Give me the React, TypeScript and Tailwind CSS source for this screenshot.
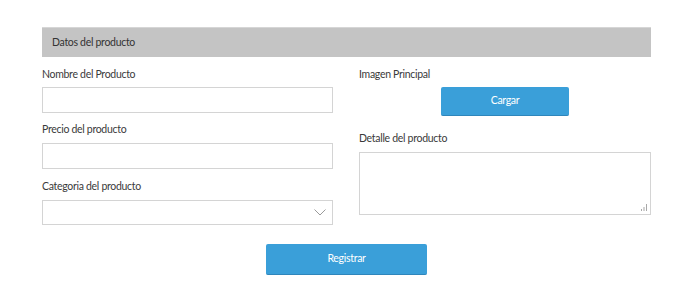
import React from "react";

const font = { fontFamily: "Lato, 'Open Sans', Arial, sans-serif" };

function Label({ children, className = "" }: { children: React.ReactNode; className?: string }) {
  return (
    <div className={`h-[14px] leading-[14px] text-[10.5px] tracking-[-0.3px] text-[#3a3a3a] ${className}`}>{children}</div>
  );
}

export default function App() {
  return (
    <div className="w-[700px] h-[300px] bg-white" style={font}>
      <div className="ml-[42px] w-[609px] pt-[27px]">
        <div className="h-[30px] bg-[#c4c4c4] border-t border-[#d6d6d6] flex items-center px-[10px] text-[10.5px] tracking-[-0.3px] text-[#333]">
          Datos del producto
        </div>
        <div className="grid grid-cols-[291px_292px] gap-x-[26px]">
          <div className="flex flex-col">
            <Label className="mt-[10px]">Nombre del Producto</Label>
            <input className="mt-[6px] h-[26px] border border-[#d4d4d4] bg-white outline-none" />
            <Label className="mt-[9px]">Precio del producto</Label>
            <input className="mt-[7px] h-[26px] border border-[#d4d4d4] bg-white outline-none" />
            <Label className="mt-[10px]">Categoria del producto</Label>
            <div className="mt-[7px] h-[25px] border border-[#d4d4d4] bg-white flex items-center justify-end pr-[6px]">
              <svg width="12" height="7" viewBox="0 0 12 7" fill="none">
                <path d="M0.5 0.5 L6 6 L11.5 0.5" stroke="#9a9a9a" strokeWidth="1" />
              </svg>
            </div>
          </div>
          <div className="flex flex-col">
            <Label className="mt-[10px]">Imagen Principal</Label>
            <div className="mt-[6px] flex justify-center">
              <button className="w-[128px] h-[29px] rounded-[2px] bg-[#3a9fd9] border-b border-[#2f86bb] text-white text-[10.5px] tracking-[-0.3px]">
                Cargar
              </button>
            </div>
            <Label className="mt-[15px]">Detalle del producto</Label>
            <div className="relative mt-[7px] h-[63px]">
              <textarea className="w-full h-full border border-[#d4d4d4] bg-white outline-none resize-none block" />
              <svg className="absolute right-[4px] bottom-[4px]" width="6" height="7" viewBox="0 0 6 7">
                <rect x="0" y="5" width="1" height="2" fill="#a8a8a8" />
                <rect x="2.5" y="3" width="1" height="4" fill="#a8a8a8" />
                <rect x="5" y="0" width="1" height="7" fill="#a8a8a8" />
              </svg>
            </div>
          </div>
        </div>
        <div className="flex justify-center mt-[19px]">
          <button className="w-[161px] h-[31px] rounded-[2px] bg-[#3a9fd9] border-b border-[#2f86bb] text-white text-[10.5px] tracking-[-0.3px]">
            Registrar
          </button>
        </div>
      </div>
    </div>
  );
}
